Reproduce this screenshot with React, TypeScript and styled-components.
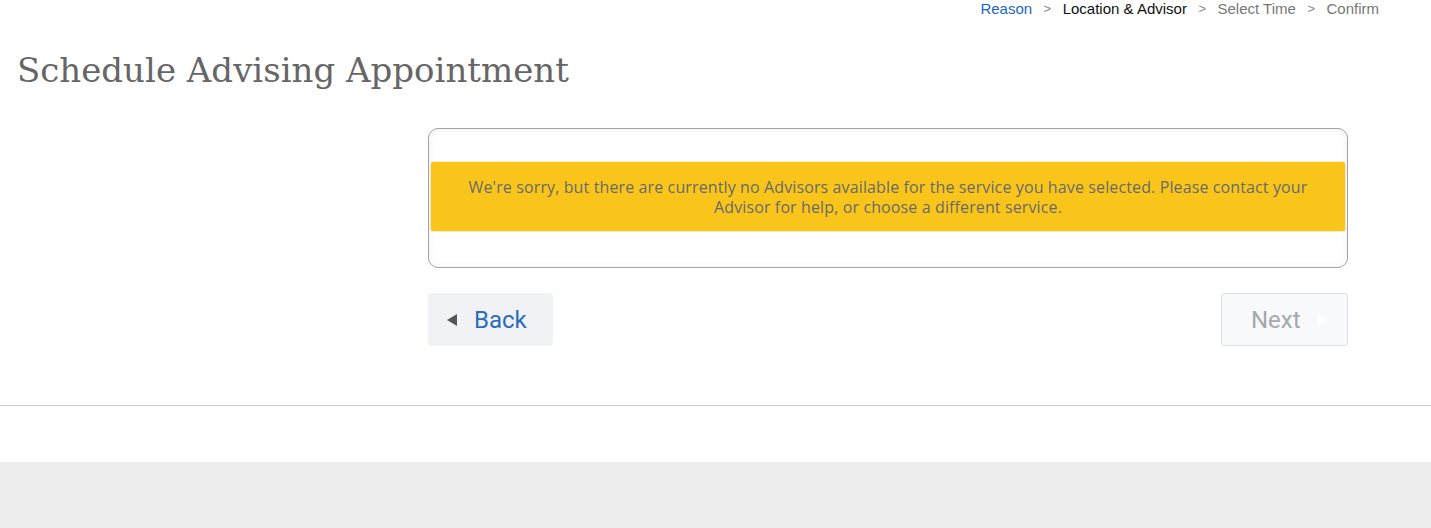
import React from 'react';
import styled, { createGlobalStyle } from 'styled-components';

const GlobalStyle = createGlobalStyle`
  html, body {
    margin: 0;
    padding: 0;
    background: #fff;
  }
  body {
    font-family: Roboto, "Liberation Sans", Arial, sans-serif;
  }
`;

const Page = styled.div`
  min-height: 528px;
  display: flex;
  flex-direction: column;
`;

const Main = styled.div`
  padding: 0 0 0 17px;
`;

const Breadcrumb = styled.nav`
  display: flex;
  justify-content: flex-end;
  align-items: center;
  gap: 11.5px;
  height: 18px;
  padding-right: 52px;
  font-family: "Liberation Sans", Arial, sans-serif;
  font-size: 15px;
  line-height: 18px;
`;

const Crumb = styled.span<{ $state: 'done' | 'current' | 'todo' }>`
  color: ${({ $state }) =>
    $state === 'done' ? '#1a66c8' : $state === 'current' ? '#111' : '#777'};
`;

const Sep = styled.span`
  color: #888;
  font-size: 13px;
`;

const Title = styled.h1`
  margin: 30px 0 0;
  font-family: "Roboto Slab", "DejaVu Serif", serif;
  font-weight: 300;
  font-size: 34px;
  line-height: 44px;
  color: #666;
`;

const Content = styled.div`
  display: grid;
  grid-template-columns: 411px 920px;
  margin-top: 36px;
`;

const Column = styled.div`
  grid-column: 2;
`;

const Card = styled.div`
  border: 1px solid #a2a2a2;
  border-radius: 10px;
  box-shadow: inset 0 0 8px rgba(0, 0, 0, 0.06);
  padding: 32px 1px 35px;
`;

const Alert = styled.div`
  background: #f9c51b;
  border: 1px solid #f5ecd0;
  border-radius: 3px;
  padding: 15px 28px 14px;
  text-align: center;
  font-family: "Open Sans", "Noto Sans", sans-serif;
  font-size: 16px;
  letter-spacing: 0.12px;
  line-height: 20px;
  color: #6a6a6a;
`;

const Actions = styled.div`
  display: flex;
  justify-content: space-between;
  margin-top: 25px;
`;

const NavButton = styled.button<{ $disabled?: boolean }>`
  display: flex;
  align-items: center;
  gap: 17px;
  height: 53px;
  padding: ${({ $disabled }) => ($disabled ? '0 0 0 29px' : '0 0 0 18px')};
  width: ${({ $disabled }) => ($disabled ? '127px' : '125px')};
  border-radius: 3px;
  border: 1px solid ${({ $disabled }) => ($disabled ? '#dcdfe3' : '#f0f2f5')};
  background: ${({ $disabled }) => ($disabled ? '#f8f9fb' : '#f0f2f5')};
  color: ${({ $disabled }) => ($disabled ? '#a5a8ad' : '#2b6cbc')};
  font-family: Roboto, "Liberation Sans", sans-serif;
  font-size: 24px;
  cursor: ${({ $disabled }) => ($disabled ? 'default' : 'pointer')};
`;

const Arrow = styled.span<{ $dir: 'left' | 'right'; $color: string }>`
  width: 0;
  height: 0;
  border-top: 6px solid transparent;
  border-bottom: 6px solid transparent;
  ${({ $dir, $color }) =>
    $dir === 'left'
      ? `border-right: 10px solid ${$color};`
      : `border-left: 10px solid ${$color};`}
`;

const Divider = styled.hr`
  margin: 59px 0 0;
  border: 0;
  border-top: 1px solid #cccccc;
`;

const Footer = styled.footer`
  margin-top: 56px;
  flex: 1;
  background: #ededed;
`;

const steps: { label: string; state: 'done' | 'current' | 'todo' }[] = [
  { label: 'Reason', state: 'done' },
  { label: 'Location & Advisor', state: 'current' },
  { label: 'Select Time', state: 'todo' },
  { label: 'Confirm', state: 'todo' },
];

export default function App() {
  return (
    <Page>
      <GlobalStyle />
      <Breadcrumb>
        {steps.map((s, i) => (
          <React.Fragment key={s.label}>
            {i > 0 && <Sep>&gt;</Sep>}
            <Crumb $state={s.state}>{s.label}</Crumb>
          </React.Fragment>
        ))}
      </Breadcrumb>
      <Main>
        <Title>Schedule Advising Appointment</Title>
        <Content>
          <Column>
            <Card>
              <Alert>
                We're sorry, but there are currently no Advisors available for the service you have
                selected. Please contact your Advisor for help, or choose a different service.
              </Alert>
            </Card>
            <Actions>
              <NavButton>
                <Arrow $dir="left" $color="#555" />
                Back
              </NavButton>
              <NavButton $disabled disabled>
                Next
                <Arrow $dir="right" $color="#fff" />
              </NavButton>
            </Actions>
          </Column>
        </Content>
      </Main>
      <Divider />
      <Footer />
    </Page>
  );
}
